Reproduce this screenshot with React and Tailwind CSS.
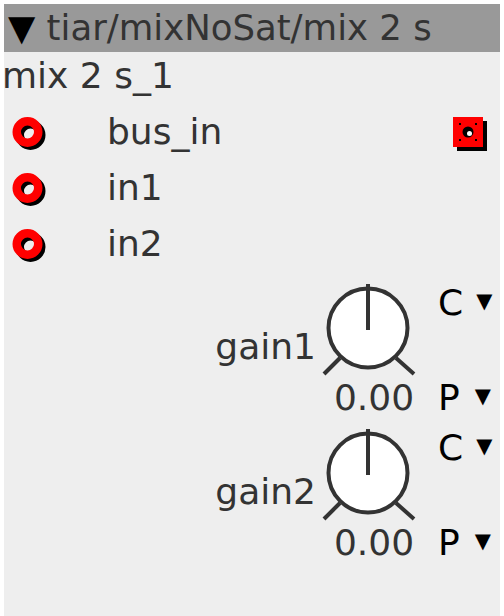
import React from 'react';

const FONT = { fontFamily: '"DejaVu Sans", "Liberation Sans", sans-serif' };

const Inlet = () => (
    <svg width="40" height="40" viewBox="0 0 40 40">
        <circle cx="22.5" cy="23" r="10.75" fill="none" stroke="#000" strokeWidth="8.5" />
        <circle cx="19.5" cy="20" r="10.75" fill="none" stroke="#ff0000" strokeWidth="8.5" />
    </svg>
);

const Outlet = () => (
    <svg width="40" height="40" viewBox="0 0 40 40">
        <rect x="4" y="9" width="30" height="30" fill="#000" />
        <rect x="0" y="5" width="30" height="30" fill="#ff0000" />
        <circle cx="15" cy="20" r="5.5" fill="#000" />
        <circle cx="16.5" cy="21.5" r="2.5" fill="#fff" />
        <rect x="6" y="11" width="2" height="2" fill="#000" />
        <rect x="22" y="11" width="2" height="2" fill="#000" />
        <rect x="6" y="27" width="2" height="2" fill="#000" />
        <rect x="22" y="27" width="2" height="2" fill="#000" />
    </svg>
);

const Knob = () => (
    <svg width="96" height="96" viewBox="0 0 96 96">
        <circle cx="48" cy="48" r="39.5" fill="#fff" stroke="#333" strokeWidth="4" />
        <line x1="48" y1="4" x2="48" y2="50" stroke="#333" strokeWidth="4" />
        <line x1="4" y1="94" x2="20" y2="78" stroke="#333" strokeWidth="4" />
        <line x1="76" y1="78" x2="94" y2="94" stroke="#333" strokeWidth="4" />
    </svg>
);

const inlets = ['bus_in', 'in1', 'in2'];
const params = [{ name: 'gain1', value: '0.00' }, { name: 'gain2', value: '0.00' }];

export default function App() {
    return (
        <div className="w-[504px] h-[616px] bg-white overflow-hidden text-[#333] text-[36px]" style={FONT}>
            <div className="ml-1 mt-1 w-[496px] h-[612px] bg-[#eeeeee]">
                {/* Header */}
                <div className="h-12 bg-[#999999] flex items-center px-1 leading-none whitespace-pre text-[35.5px]">
                    <span className="text-black">▼</span>
                    <span> tiar/mixNoSat/mix 2 s</span>
                </div>

                <div className="h-[52px] pt-[5.5px] -ml-0.5 leading-none">mix 2 s_1</div>

                {/* Inlets */}
                {inlets.map((name, i) => (
                    <div key={name} className="h-14 flex items-center leading-none">
                        <div className="w-[103px] pl-1 flex items-center">
                            <Inlet />
                        </div>
                        <span>{name}</span>
                        {i === 0 && (
                            <div className="ml-auto mr-[7px] flex items-center">
                                <Outlet />
                            </div>
                        )}
                    </div>
                ))}

                {/* Params */}
                {params.map((p) => (
                    <div key={p.name} className="h-[145px] flex justify-end leading-none">
                        <div className="mt-[56.5px] h-[36px] pr-1">{p.name}</div>
                        <div className="w-24 flex flex-col">
                            <div className="mt-2 h-24">
                                <Knob />
                            </div>
                            <div className="mt-[3.5px] h-[36px] pl-3 text-center">{p.value}</div>
                        </div>
                        <div className="ml-[22px] w-[62px] flex flex-col">
                            <div className="mt-[12.5px] h-[36px] flex items-start">
                                <span className="text-black">C</span>
                                <span className="ml-[13px] mt-[6px] text-[21px] text-black">▼</span>
                            </div>
                            <div className="mt-[59px] h-[36px] flex items-start">
                                <span className="text-black">P</span>
                                <span className="ml-[15px] mt-[6px] text-[21px] text-black">▼</span>
                            </div>
                        </div>
                    </div>
                ))}
            </div>
        </div>
    );
}
